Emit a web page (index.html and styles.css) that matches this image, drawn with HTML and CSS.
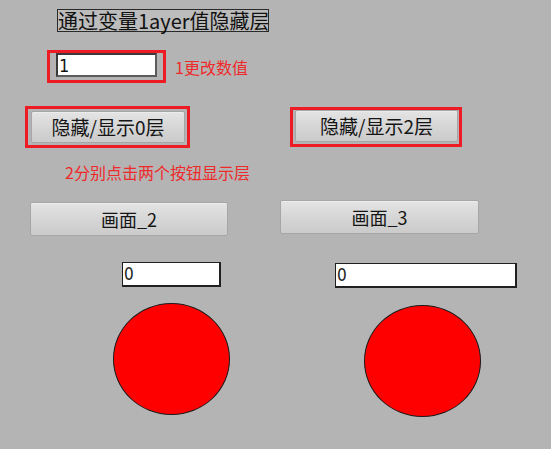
FILE: index.html
```html
<!DOCTYPE html>
<html lang="zh">

<head>
    <meta charset="UTF-8">
    <meta name="viewport" content="width=device-width, initial-scale=1.0">
    <title>layer</title>
    <link rel="stylesheet" href="styles.css">
</head>

<body>
<div class="screen">
    <div class="row r1">
        <span class="title">通过变量1ayer值隐藏层</span>
    </div>
    <div class="row r2">
        <div class="mark m-input">
            <input type="text" class="val" value="1"/>
        </div>
        <span class="note n1">1更改数值</span>
    </div>
    <div class="row r3">
        <div class="mark m-b0">
            <button type="button" class="btn b-layer">隐藏/显示0层</button>
        </div>
        <div class="mark m-b2">
            <button type="button" class="btn b-layer2">隐藏/显示2层</button>
        </div>
    </div>
    <div class="row r4">
        <span class="note n2">2分别点击两个按钮显示层</span>
    </div>
    <div class="row r5">
        <button type="button" class="btn b-pic b-pic1">画面_2</button>
        <button type="button" class="btn b-pic b-pic2">画面_3</button>
    </div>
    <div class="row r6">
        <input type="text" class="num num1" value="0"/>
        <input type="text" class="num num2" value="0"/>
    </div>
    <div class="row r7">
        <div class="lamp lamp1"></div>
        <div class="lamp lamp2"></div>
    </div>
</div>
</body>

</html>
```

FILE: styles.css
```css
body {
    margin: 0;
    padding: 0;
    background: #b4b4b4;
    font-family: "Noto Sans CJK SC", "Noto Sans", sans-serif;
    color: #1a1a1a;
}

.screen {
    width: 551px;
    height: 449px;
    overflow: hidden;
}

.row {
    display: flex;
    align-items: flex-start;
}

.r1 {
    padding: 9px 0 0 57px;
}

.title {
    box-sizing: border-box;
    display: block;
    width: 212px;
    height: 23px;
    border: 1px solid #2a2a2a;
    background: #bcbcbc;
    font-size: 20px;
    line-height: 21px;
    text-align: center;
    color: #111;
    white-space: nowrap;
}

.r2 {
    margin-top: 18px;
    padding-left: 47px;
}

.mark {
    border: 3px solid #ed1c24;
    display: flex;
}

.m-input {
    width: 101px;
    height: 24px;
    padding: 0 6px 3px;
}

.val {
    box-sizing: border-box;
    width: 101px;
    height: 24px;
    margin: 0;
    padding: 0 1px;
    border: 2px solid #3a3a3a;
    border-right-color: #5c5c5c;
    border-bottom-color: #5c5c5c;
    background: #fff;
    outline: 0;
    font-family: "DejaVu Sans Condensed", "DejaVu Sans", sans-serif;
    font-size: 18px;
    color: #111;
}

.note {
    color: #ee2a2a;
    font-size: 16px;
    line-height: 20px;
}

.n1 {
    margin: 7px 0 0 9px;
}

.r3 {
    margin-top: 23px;
    padding-left: 25px;
}

.m-b0 {
    padding: 2px 2px 2px 3px;
}

.m-b2 {
    margin: 1px 0 0 100px;
    padding: 0 1px 2px 2px;
}

.btn {
    box-sizing: border-box;
    margin: 0;
    padding: 0;
    border: 1px solid #a6a6a6;
    border-radius: 2px;
    background: linear-gradient(#e4e4e4, #d6d6d6 50%, #cbcbcb);
    box-shadow: inset 0 1px 0 #ececec;
    font-family: "Noto Sans CJK SC", "Noto Sans", sans-serif;
    color: #151515;
    cursor: pointer;
}

.b-layer {
    width: 154px;
    height: 32px;
    font-size: 19px;
    line-height: 28px;
}

.b-layer2 {
    width: 163px;
    height: 32px;
    font-size: 19px;
    line-height: 28px;
}

.r4 {
    margin-top: 14px;
    padding-left: 65px;
}

.r5 {
    margin-top: 18px;
    padding-left: 30px;
}

.b-pic {
    height: 34px;
    font-size: 18px;
    line-height: 30px;
}

.b-pic1 {
    width: 198px;
    margin-top: 2px;
}

.b-pic2 {
    width: 199px;
    margin-left: 52px;
}

.r6 {
    margin-top: 26px;
    padding-left: 122px;
}

.num {
    box-sizing: border-box;
    height: 25px;
    margin: 0;
    padding: 0 1px;
    border: 1px solid #202020;
    border-right-width: 2px;
    border-bottom-width: 2px;
    background: #fff;
    outline: 0;
    font-family: "DejaVu Sans Condensed", "DejaVu Sans", sans-serif;
    font-size: 17px;
    color: #222;
}

.num1 {
    width: 99px;
}

.num2 {
    width: 182px;
    margin: 1px 0 0 114px;
}

.r7 {
    margin-top: 15px;
    padding-left: 113px;
}

.lamp {
    box-sizing: border-box;
    width: 117px;
    height: 112px;
    border: 1px solid #1a1a1a;
    border-radius: 50%;
    background: #ff0000;
}

.lamp2 {
    margin: 2px 0 0 134px;
}
```
